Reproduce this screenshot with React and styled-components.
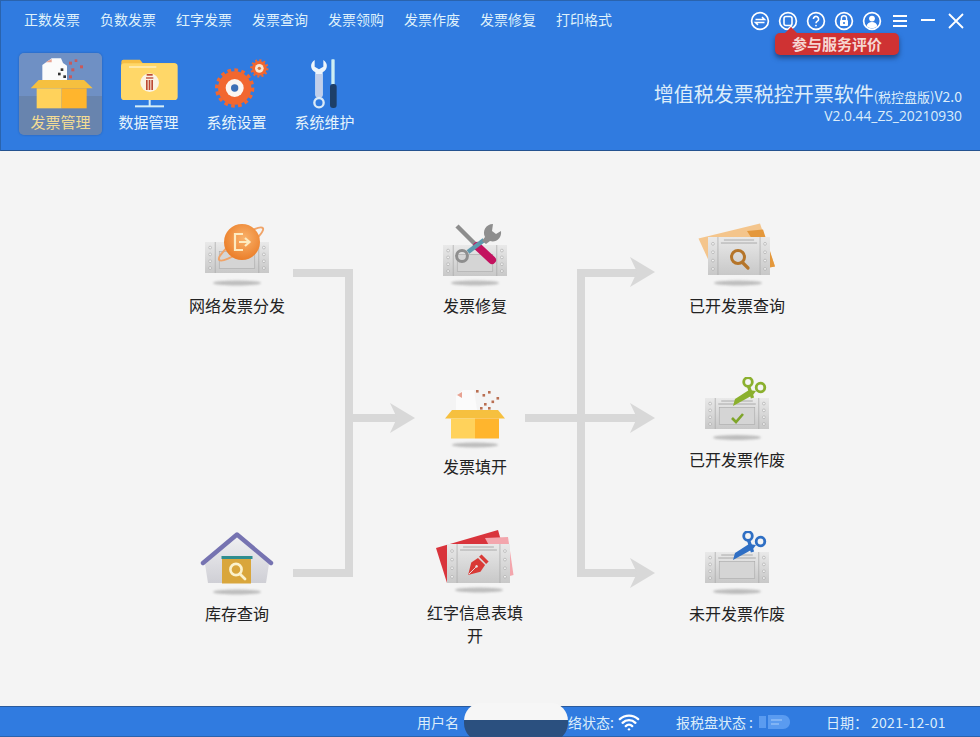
import React, { useId } from "react";
import styled, { createGlobalStyle } from "styled-components";
import { Wifi } from "lucide-react";

const GlobalStyle = createGlobalStyle`
  html, body {
    margin: 0;
    padding: 0;
    background: #f4f4f4;
  }
  * { box-sizing: border-box; }
`;

const fontStack = `"Noto Sans CJK SC", "Noto Sans", sans-serif`;

const Window = styled.div`
  width: 980px;
  height: 737px;
  display: flex;
  flex-direction: column;
  overflow: hidden;
  font-family: ${fontStack};
  background: #f4f4f4;
`;

const Header = styled.header`
  height: 151px;
  flex: none;
  display: flex;
  justify-content: space-between;
  background: #307be0;
  border-top: 1px solid #2a63ad;
  border-bottom: 1px solid #24528f;
  border-left: 1px solid #2a63ad;
  position: relative;
`;

const HeaderLeft = styled.div`
  display: flex;
  flex-direction: column;
`;

const MenuRow = styled.nav`
  height: 35px;
  display: flex;
  align-items: center;
  gap: 20px;
  padding-left: 23px;
`;

const MenuItem = styled.span`
  font-size: 14px;
  line-height: 20px;
  color: #dff1fb;
  white-space: nowrap;
`;

const ToolRow = styled.div`
  display: flex;
  gap: 5px;
  margin-top: 17px;
  padding-left: 18px;
`;

const ToolButton = styled.div`
  width: 83px;
  height: 82px;
  display: flex;
  flex-direction: column;
  align-items: center;
  padding-top: 3px;
  border-radius: 5px;
  background: ${(p) =>
    p.$active ? "linear-gradient(#6f90c4 0, #6f90c4 52%, #6884ae 52%, #6884ae 100%)" : "transparent"};
  box-shadow: ${(p) => (p.$active ? "0 0 2px rgba(30, 60, 110, 0.5)" : "none")};
`;

const ToolLabel = styled.span`
  font-size: 15px;
  line-height: 20px;
  margin-top: 2px;
  color: ${(p) => (p.$active ? "#f3dc94" : "#e6f4fb")};
  white-space: nowrap;
`;

const HeaderRight = styled.div`
  display: flex;
  flex-direction: column;
  align-items: flex-end;
  padding-right: 10px;
`;

const WindowBar = styled.div`
  height: 39px;
  display: flex;
  align-items: center;
`;

const WindowSlot = styled.span`
  width: 28px;
  display: flex;
  justify-content: center;
`;

const RatePopup = styled.div`
  position: absolute;
  left: 774px;
  top: 32px;
  width: 124px;
  height: 22px;
  background: #cf3233;
  border-radius: 5px;
  box-shadow: 0 3px 5px rgba(20, 30, 60, 0.55);
  color: #f6d6d2;
  font-size: 15px;
  font-weight: 700;
  line-height: 21px;
  text-align: center;

  &::before {
    content: "";
    position: absolute;
    left: 10px;
    top: -6px;
    border-left: 6px solid transparent;
    border-right: 6px solid transparent;
    border-bottom: 6px solid #cf3233;
  }
`;

const TitleLine = styled.div`
  margin-top: 40px;
  padding-right: 8px;
  display: flex;
  align-items: baseline;
  color: #dcedfa;
  font-size: 20px;
  line-height: 28px;
  white-space: nowrap;
`;

const TitleSmall = styled.span`
  font-size: 13px;
`;

const TitleVersion = styled.span`
  font-size: 14px;
`;

const VersionLine = styled.div`
  margin-top: -5px;
  padding-right: 8px;
  color: #dcedfa;
  font-family: "Open Sans", "Noto Sans", sans-serif;
  font-size: 13.8px;
  line-height: 20px;
  white-space: nowrap;
`;

const Canvas = styled.main`
  flex: 1;
  position: relative;
  background: #f4f4f4;
`;

const Wires = styled.svg`
  position: absolute;
  left: 0;
  top: 0;
`;

const Node = styled.div`
  position: absolute;
  left: ${(p) => p.$cx - 50}px;
  top: ${(p) => p.$top - 151}px;
  width: 100px;
  display: flex;
  flex-direction: column;
  align-items: center;
`;

const NodeLabel = styled.div`
  margin-top: -1px;
  font-size: 16px;
  line-height: 23px;
  color: #222;
  text-align: center;
`;

const StatusBar = styled.footer`
  height: 31px;
  flex: none;
  position: relative;
  display: flex;
  align-items: center;
  padding-left: 417px;
  background: #307be0;
  border-top: 1px solid #2a5a9c;
  border-bottom: 1px solid #2a63ad;
  color: #dcedfa;
  font-size: 14px;
  white-space: nowrap;
`;

const StatusText = styled.span`
  margin-left: ${(p) => p.$gap || 0}px;
  letter-spacing: ${(p) => p.$spacing || 0}px;
`;

const StatusIcon = styled.span`
  display: flex;
  margin-left: ${(p) => p.$gap || 0}px;
`;

const Redaction = styled.div`
  position: absolute;
  left: 464px;
  top: -4px;
  width: 104px;
  height: 38px;
  border-radius: 17px / 18px;
  background: linear-gradient(#f6f6f6 0, #f6f6f6 45%, #2b507f 45%, #2b507f 100%);
`;

const GroundShadow = styled.ellipse`
  fill: #bdbdbd;
  filter: blur(1.2px);
`;

function CircleIcon({ children }) {
  return (
    <svg width="20" height="20" viewBox="0 0 20 20" fill="none" stroke="#fff" strokeWidth="1.7">
      <circle cx="10" cy="10" r="8.4" />
      {children}
    </svg>
  );
}

function WindowIcons() {
  return (
    <WindowBar>
      <WindowSlot>
        <CircleIcon>
          <path d="M5.5 8.500h9l-2.500-2.400M14.500 11.500h-9l2.500 2.400" strokeWidth="1.5" />
        </CircleIcon>
      </WindowSlot>
      <WindowSlot>
        <CircleIcon>
          <rect x="6" y="5.500" width="8" height="9" rx="2" strokeWidth="1.6" />
          <path d="M10 18l4-3.500" strokeWidth="1.4" />
        </CircleIcon>
      </WindowSlot>
      <WindowSlot>
        <CircleIcon>
          <path d="M7.400 8a2.600 2.600 0 1 1 4 2.200c-.9.600-1.400 1-1.400 2" strokeWidth="1.6" />
          <circle cx="10" cy="14.600" r=".9" fill="#fff" stroke="none" />
        </CircleIcon>
      </WindowSlot>
      <WindowSlot>
        <CircleIcon>
          <path d="M7.400 9V7.400a2.600 2.600 0 0 1 5.200 0V9" strokeWidth="1.4" />
          <rect x="6" y="9" width="8" height="6" rx="1" fill="#fff" stroke="none" />
          <circle cx="10" cy="12" r="1.100" fill="#307be0" stroke="none" />
        </CircleIcon>
      </WindowSlot>
      <WindowSlot>
        <CircleIcon>
          <circle cx="10" cy="7.600" r="2.900" fill="#fff" stroke="none" />
          <path d="M4.600 15.200c.6-3 2.800-4.200 5.400-4.200s4.800 1.200 5.400 4.200a8 8 0 0 1-10.800 0z" fill="#fff" stroke="none" />
        </CircleIcon>
      </WindowSlot>
      <WindowSlot>
        <svg width="16" height="14" viewBox="0 0 16 14" stroke="#fff" strokeWidth="2">
          <path d="M1 2h14M1 7h14M1 12h14" />
        </svg>
      </WindowSlot>
      <WindowSlot>
        <svg width="16" height="14" viewBox="0 0 16 14" stroke="#fff" strokeWidth="2">
          <path d="M1 6h14" />
        </svg>
      </WindowSlot>
      <WindowSlot>
        <svg width="16" height="16" viewBox="0 0 16 16" stroke="#fff" strokeWidth="1.8">
          <path d="M1 1l14 14M15 1L1 15" />
        </svg>
      </WindowSlot>
    </WindowBar>
  );
}

/* toolbar icons are drawn in 3x units so the numbers read like the crop */
function ToolIcon({ view, children }) {
  return (
    <svg width="70" height="54" viewBox={view}>
      {children}
    </svg>
  );
}

function ManageIcon() {
  return (
    <ToolIcon view="76 168 210 162">
      <path d="M125 195l28-20h28l6 14 12 8v45h-74z" fill="#fbfbfb" />
      <path d="M135 187l18-10v10z" fill="#e8a393" />
      <g fill="#333">
        <rect x="180" y="205" width="8" height="8" />
        <rect x="172" y="218" width="8" height="8" />
        <rect x="188" y="226" width="8" height="8" />
      </g>
      <g fill="#c9595a">
        <rect x="205" y="185" width="9" height="9" />
        <rect x="222" y="178" width="8" height="8" />
        <rect x="212" y="205" width="9" height="9" />
        <rect x="238" y="196" width="9" height="9" />
        <rect x="205" y="226" width="9" height="9" />
      </g>
      <path d="M90 265l24-25h136l26 25z" fill="#f6c03f" />
      <path d="M108 265h75v60h-75z" fill="#ffd25b" />
      <path d="M183 265h75v60h-75z" fill="#ffb52d" />
    </ToolIcon>
  );
}

function FolderIcon() {
  return (
    <ToolIcon view="340 168 210 162">
      <path d="M362 185a6 6 0 0 1 6-6h50l8 10h92a10 10 0 0 1 10 10v30H362z" fill="#f6be43" />
      <rect x="361" y="190" width="170" height="110" rx="10" fill="#ffd768" />
      <rect x="385" y="199" width="82" height="4" fill="#fff2c8" />
      <circle cx="447" cy="248" r="28" fill="#fbf3e3" />
      <g fill="#bd4a34">
        <rect x="438" y="222" width="18" height="5" />
        <rect x="436" y="232" width="22" height="4" />
        <rect x="436" y="240" width="5" height="30" />
        <rect x="444" y="240" width="5" height="30" />
        <rect x="452" y="240" width="5" height="30" />
      </g>
      <rect x="444" y="300" width="6" height="18" fill="#d5edf6" />
      <rect x="403" y="316" width="87" height="6" fill="#d5edf6" />
    </ToolIcon>
  );
}

function GearIcon() {
  return (
    <ToolIcon view="605 168 210 162">
      <circle cx="703" cy="264" r="50" fill="#f2672f" />
      <circle cx="703" cy="264" r="54" fill="none" stroke="#f2672f" strokeWidth="10" strokeDasharray="11 10" />
      <circle cx="703" cy="264" r="27" fill="#fbf6f1" />
      <circle cx="703" cy="264" r="11" fill="#3d70b6" />
      <circle cx="777" cy="205" r="22" fill="#f2672f" />
      <circle cx="777" cy="205" r="24" fill="none" stroke="#f2672f" strokeWidth="7" strokeDasharray="6 6.500" />
      <circle cx="777" cy="205" r="13" fill="#f8e7d4" />
      <circle cx="777" cy="205" r="5" fill="#d8743d" />
    </ToolIcon>
  );
}

function ToolsIcon() {
  return (
    <ToolIcon view="868 168 210 162">
      <path
        d="M942 180c-14 8-15 28 2 37v70h22v-70c17-9 16-29 2-37v20l-13 8-13-8z"
        fill="#eef5fb"
      />
      <rect x="945" y="222" width="20" height="70" fill="#c2cfe9" />
      <circle cx="955" cy="308" r="14" fill="none" stroke="#dbeaf7" strokeWidth="7" />
      <rect x="992" y="178" width="10" height="76" rx="2" fill="#cdeff3" />
      <rect x="988" y="252" width="20" height="72" rx="9" fill="#1d3f68" />
    </ToolIcon>
  );
}

function Shadow({ cx = 40, cy = 60, rx = 24 }) {
  return <GroundShadow cx={cx} cy={cy} rx={rx} ry="2.4" />;
}

function Ticket({ x = 8, y = 19, w = 64, h = 31, panel = true, rules = false }) {
  const id = useId();
  const strip = w * 0.16;
  const holes = [0.18, 0.4, 0.62, 0.84];
  return (
    <g>
      <defs>
        <linearGradient id={id} x1="0" y1="0" x2="0" y2="1">
          <stop offset="0" stopColor="#e9e9e9" />
          <stop offset="1" stopColor="#c8c8c8" />
        </linearGradient>
      </defs>
      <rect x={x} y={y} width={w} height={h} fill={`url(#${id})`} />
      <path
        d={`M${x + strip} ${y}v${h}M${x + w - strip} ${y}v${h}`}
        stroke="#a8a8a8"
        strokeWidth=".7"
      />
      {holes.map((k) => (
        <g key={k} fill="#f2f2f2" stroke="#9a9a9a" strokeWidth=".5">
          <circle cx={x + strip / 2} cy={y + h * k} r="1.4" />
          <circle cx={x + w - strip / 2} cy={y + h * k} r="1.4" />
        </g>
      ))}
      {panel && (
        <rect
          x={x + strip + 4}
          y={y + h * 0.3}
          width={w - 2 * strip - 8}
          height={h * 0.56}
          fill="#d5d5d5"
          stroke="#a9a9a9"
          strokeWidth=".6"
        />
      )}
      {rules && (
        <path
          d={`M${x + strip + 6} ${y + 3}h${w - 2 * strip - 12}M${x + strip + 3} ${y + 6}h${w - 2 * strip - 6}`}
          stroke="#9c9c9c"
          strokeWidth=".8"
        />
      )}
    </g>
  );
}

function NodeIcon({ children }) {
  return (
    <svg width="80" height="72" viewBox="0 0 80 72">
      {children}
    </svg>
  );
}

function DispatchIcon() {
  const id = useId();
  return (
    <NodeIcon>
      <defs>
        <radialGradient id={id} cx="0.55" cy="0.4" r="0.7">
          <stop offset="0" stopColor="#f9b36c" />
          <stop offset="1" stopColor="#e9761f" />
        </radialGradient>
      </defs>
      <Ticket x={8} y={19} w={64} h={31} />
      <ellipse cx="44" cy="21" rx="27" ry="6" transform="rotate(-36 44 21)" fill="none" stroke="#f0a469" strokeWidth="2" />
      <circle cx="45" cy="19" r="18" fill={`url(#${id})`} />
      <path d="M46 11h-8v16h8" fill="none" stroke="#fdebc0" strokeWidth="2.200" />
      <path d="M42 19h10M48 15l4.500 4-4.500 4" fill="none" stroke="#fdebc0" strokeWidth="2.200" />
      <Shadow cy={60} />
    </NodeIcon>
  );
}

function RepairIcon() {
  return (
    <NodeIcon>
      <Ticket x={8} y={22} w={64} h={31} />
      <path d="M22 3l22 22" stroke="#8d8d8d" strokeWidth="4.500" />
      <path d="M42 23l15 14" stroke="#c3125f" strokeWidth="8" strokeLinecap="round" />
      <path d="M49 17L33 29" stroke="#5e9aae" strokeWidth="4.500" />
      <path
        d="M58 1c-7 0-11 7-8 13l-3 4 4 3 4-3c6 2 12-3 11-10l-5 3-4-3z"
        fill="#8e8e8e"
      />
      <circle cx="27" cy="33" r="5.400" fill="none" stroke="#8e8e8e" strokeWidth="3" />
      <Shadow cy={60} />
    </NodeIcon>
  );
}

function QueryIcon() {
  return (
    <NodeIcon>
      <path d="M1.500 15.500L63 .5l15 43-60 8z" fill="#f4c58c" />
      <path d="M50 8l16-1.500 12 37-5 1z" fill="#e4983c" />
      <Ticket x={11} y={14} w={62} h={38} panel={false} rules />
      <circle cx="41" cy="34" r="6.500" fill="none" stroke="#b5752a" strokeWidth="3" />
      <path d="M45.500 39.500l5.500 5.500" stroke="#b5752a" strokeWidth="3.200" strokeLinecap="round" />
      <Shadow cx={41} cy={60} />
    </NodeIcon>
  );
}

function BoxIcon() {
  const dots = [
    [41, 6],
    [53, 7],
    [47.5, 10],
    [61.5, 13],
    [56.5, 16.5],
    [49, 19],
    [45, 23],
    [53, 23],
  ];
  return (
    <NodeIcon>
      <path d="M21 12l7-6h11l3 20H21z" fill="#fbfbfb" />
      <path d="M22 11l5-3v6z" fill="#e8a393" />
      {dots.map(([x, y]) => (
        <rect key={`${x}-${y}`} x={x} y={y} width="2.600" height="2.600" fill="#b96f52" />
      ))}
      <path d="M10 34.500L17 26h46l7 8.500z" fill="#f6c03f" />
      <path d="M16 34.500h24v20H16z" fill="#ffd25b" />
      <path d="M40 34.500h24v20H40z" fill="#ffb52d" />
      <Shadow cy={61} rx={23} />
    </NodeIcon>
  );
}

function ScissorsTicket({ color, check }) {
  return (
    <NodeIcon>
      <Ticket x={8} y={21} w={64} h={31} rules />
      {check && <path d="M35 41l4 4 7-8" fill="none" stroke="#7fa52b" strokeWidth="2.600" />}
      <path d="M36 29l2-7 14-9 7 1-3 4z" fill={color} />
      <path d="M51.500 9l4 12" stroke={color} strokeWidth="3.400" />
      <circle cx="51" cy="5" r="4.300" fill="none" stroke={color} strokeWidth="2.800" />
      <circle cx="63.500" cy="10.500" r="4.300" fill="none" stroke={color} strokeWidth="2.800" />
      <Shadow cy={60.5} />
    </NodeIcon>
  );
}

function HouseIcon() {
  const id = useId();
  return (
    <NodeIcon>
      <defs>
        <linearGradient id={id} x1="0" y1="0" x2="0" y2="1">
          <stop offset="0" stopColor="#f0f0f2" />
          <stop offset="1" stopColor="#cfcfd5" />
        </linearGradient>
      </defs>
      <path d="M8 33L40 5l32 28-3 19H11z" fill={`url(#${id})`} />
      <path d="M6 32L40 3.500 74 32" fill="none" stroke="#7673b1" strokeWidth="4.400" strokeLinejoin="round" strokeLinecap="round" />
      <rect x="25" y="27.500" width="29" height="25" fill="#d9a63c" />
      <rect x="24.500" y="25" width="31" height="3" fill="#2f8d8f" />
      <circle cx="39" cy="38.500" r="5.600" fill="none" stroke="#fbf2cd" strokeWidth="2.600" />
      <path d="M43 43l5 5" stroke="#fbf2cd" strokeWidth="2.800" strokeLinecap="round" />
      <Shadow cy={61} />
    </NodeIcon>
  );
}

function RedNoteIcon() {
  return (
    <NodeIcon>
      <path d="M1 18L63 0l4 14-55 39z" fill="#d9343c" />
      <path d="M50 8l23-1 5.500 38-8 2z" fill="#f3a6ad" />
      <Ticket x={12} y={14} w={63} h={39} panel={false} rules />
      <g transform="translate(43 35) rotate(45)" fill="#d93a36">
        <path d="M0 14L-6.500 3-5-5H5l1.500 8z" />
        <rect x="-5" y="-10" width="10" height="3.500" />
        <path d="M0 13V3" stroke="#e6e6e6" strokeWidth=".9" />
        <circle cx="0" cy="2" r="1.300" fill="#e6e6e6" />
      </g>
      <Shadow cx={44} cy={60} />
    </NodeIcon>
  );
}

const arrowColor = "#d8d8d8";

function Arrow({ x, y }) {
  return <path d={`M${x} ${y - 15}l25 15-25 15 7-15z`} fill={arrowColor} />;
}

/* coordinates are page ones, the viewBox moves them to the top of the canvas */
function Connectors() {
  return (
    <Wires width="980" height="555" viewBox="0 151 980 555">
      <g fill="none" stroke={arrowColor} strokeWidth="8">
        <path d="M293 273h56v300h-56" />
        <path d="M349 418h48" />
        <path d="M525 418h112" />
        <path d="M637 273h-56v300h56" />
      </g>
      <Arrow x={630} y={272} />
      <Arrow x={390} y={418} />
      <Arrow x={630} y={418} />
      <Arrow x={630} y={573} />
    </Wires>
  );
}

function UsbIcon() {
  return (
    <svg width="32" height="16" viewBox="0 0 32 16">
      <rect x="0" y="2" width="7" height="12" fill="#5a9bf0" />
      <path d="M9 1h15c4 0 7 3 7 7s-3 7-7 7H9z" fill="#5a9bf0" />
      <path d="M12 6h11M12 10h8" stroke="#8fbdf6" strokeWidth="1.400" />
    </svg>
  );
}

const menus = ["正数发票", "负数发票", "红字发票", "发票查询", "发票领购", "发票作废", "发票修复", "打印格式"];

const tools = [
  { label: "发票管理", Icon: ManageIcon, active: true },
  { label: "数据管理", Icon: FolderIcon },
  { label: "系统设置", Icon: GearIcon },
  { label: "系统维护", Icon: ToolsIcon },
];

const nodes = [
  { label: "网络发票分发", cx: 237, top: 223, icon: <DispatchIcon /> },
  { label: "发票修复", cx: 475, top: 223, icon: <RepairIcon /> },
  { label: "已开发票查询", cx: 737, top: 223, icon: <QueryIcon /> },
  { label: "发票填开", cx: 475, top: 384, icon: <BoxIcon /> },
  { label: "已开发票作废", cx: 737, top: 377, icon: <ScissorsTicket color="#8bb02e" check /> },
  { label: "库存查询", cx: 237, top: 531, icon: <HouseIcon /> },
  { label: "红字信息表填开", cx: 475, top: 530, icon: <RedNoteIcon /> },
  { label: "未开发票作废", cx: 737, top: 531, icon: <ScissorsTicket color="#2f6fc4" /> },
];

export default function App() {
  return (
    <>
      <GlobalStyle />
      <Window>
        <Header>
          <HeaderLeft>
            <MenuRow>
              {menus.map((m) => (
                <MenuItem key={m}>{m}</MenuItem>
              ))}
            </MenuRow>
            <ToolRow>
              {tools.map(({ label, Icon, active }) => (
                <ToolButton key={label} $active={active}>
                  <Icon />
                  <ToolLabel $active={active}>{label}</ToolLabel>
                </ToolButton>
              ))}
            </ToolRow>
          </HeaderLeft>
          <HeaderRight>
            <WindowIcons />
            <TitleLine>
              增值税发票税控开票软件
              <TitleSmall>(税控盘版)</TitleSmall>
              <TitleVersion>V2.0</TitleVersion>
            </TitleLine>
            <VersionLine>V2.0.44_ZS_20210930</VersionLine>
          </HeaderRight>
          <RatePopup>参与服务评价</RatePopup>
        </Header>
        <Canvas>
          <Connectors />
          {nodes.map((n) => (
            <Node key={n.label} $cx={n.cx} $top={n.top}>
              {n.icon}
              <NodeLabel>{n.label}</NodeLabel>
            </Node>
          ))}
        </Canvas>
        <StatusBar>
          <StatusText>用户名</StatusText>
          <StatusText $gap={95}>网络状态:</StatusText>
          <StatusIcon $gap={4}>
            <Wifi size={22} color="#fff" strokeWidth={2.6} />
          </StatusIcon>
          <StatusText $gap={36}>报税盘状态 :</StatusText>
          <StatusIcon $gap={6}>
            <UsbIcon />
          </StatusIcon>
          <StatusText $gap={35}>日期：</StatusText>
          <StatusText $gap={3} $spacing={0.3}>2021-12-01</StatusText>
          <Redaction />
        </StatusBar>
      </Window>
    </>
  );
}
